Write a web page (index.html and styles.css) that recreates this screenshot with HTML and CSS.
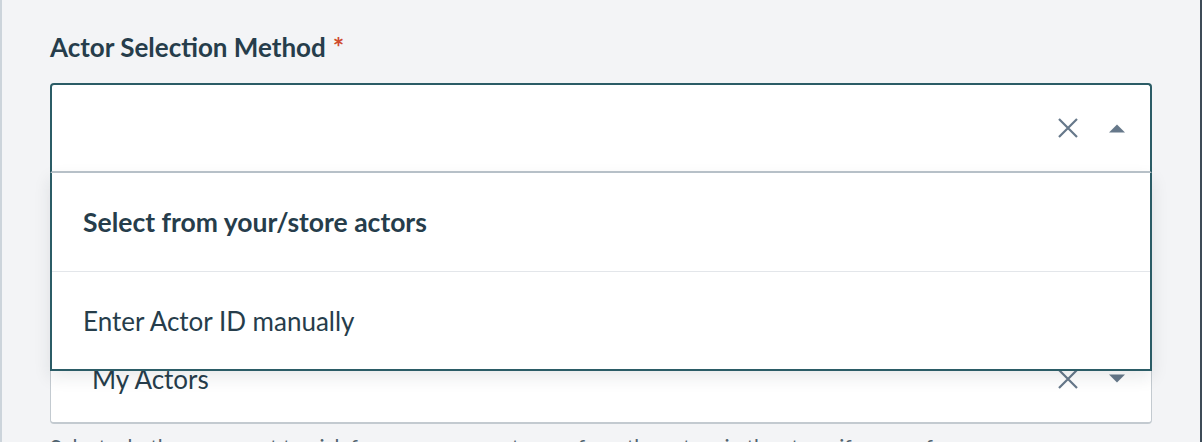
FILE: index.html
```html
<!DOCTYPE html>
<html>
<head>
<meta charset="utf-8">
<link rel="stylesheet" href="styles.css">
</head>
<body>
<div class="panel">
  <div class="group">
    <label class="label">Actor Selection Method<span class="req">*</span></label>
    <div class="select-wrap">
      <div class="select open">
        <div class="value"></div>
        <div class="icons">
          <svg class="clear" width="20" height="20" viewBox="0 0 20 20"><path d="M1 1L19 19M19 1L1 19" stroke="#66788a" stroke-width="2.2" fill="none"/></svg>
          <svg class="caret" width="16" height="9" viewBox="0 0 16 9"><path d="M8 0.5L16 8.5H0Z" fill="#66788a"/></svg>
        </div>
      </div>
      <ul class="menu">
        <li class="option selected">Select from your/store actors</li>
        <li class="option">Enter Actor ID manually</li>
      </ul>
    </div>
  </div>
  <div class="group second">
    <div class="select closed">
      <div class="value">My Actors</div>
      <div class="icons">
        <svg class="clear" width="20" height="20" viewBox="0 0 20 20"><path d="M1 1L19 19M19 1L1 19" stroke="#66788a" stroke-width="2.2" fill="none"/></svg>
        <svg class="caret" width="16" height="9" viewBox="0 0 16 9"><path d="M0 0.5H16L8 8.5Z" fill="#66788a"/></svg>
      </div>
    </div>
    <p class="help">Select whether you want to pick from your own actors or from the actors in the store, if you prefer.</p>
  </div>
</div>
</body>
</html>
```

FILE: styles.css
```css
html, body {
  margin: 0;
  padding: 0;
}
body {
  width: 1202px;
  height: 442px;
  overflow: hidden;
  box-sizing: border-box;
  background: #f3f4f6;
  border-left: 2px solid #ccd4db;
  border-right: 2px solid #3d4b57;
  font-family: Lato, "Noto Sans", sans-serif;
  color: #263d4b;
}
.panel {
  padding: 30px 48px 0 48px;
  width: 1102px;
}
.group {
  display: flex;
  flex-direction: column;
}
.label {
  display: block;
  font-size: 26px;
  font-weight: 700;
  line-height: 34px;
  margin-bottom: 19px;
}
.req {
  color: #cf4a2d;
  margin-left: 7px;
  font-size: 27px;
}
.select-wrap {
  position: relative;
  z-index: 5;
}
.select {
  box-sizing: border-box;
  height: 90px;
  background: #fff;
  display: flex;
  align-items: center;
  justify-content: space-between;
}
.select.open {
  border: 2px solid #2b5c66;
  border-bottom: 2px solid #bac4cb;
  border-radius: 4px 4px 0 0;
}
.select.closed {
  border: 1px solid #c3cad0;
  border-bottom-width: 2px;
  border-radius: 4px;
  padding-left: 41px;
}
.value {
  font-size: 26px;
  flex: 1;
}
.icons {
  display: flex;
  align-items: center;
  gap: 31px;
  padding-right: 25px;
}
.closed .icons {
  padding-right: 26px;
}
.clear {
  display: block;
}
.caret {
  display: block;
}
.menu {
  position: absolute;
  left: 0;
  right: 0;
  top: 100%;
  margin: 0;
  padding: 0;
  list-style: none;
  background: #fff;
  border: 2px solid #2b5c66;
  border-top: 0;
  box-shadow: 0 6px 16px rgba(30, 40, 50, 0.10);
}
.option {
  height: 98px;
  display: flex;
  align-items: center;
  padding-left: 31px;
  font-size: 26px;
}
.option.selected {
  font-weight: 700;
  font-size: 26.5px;
}
.option + .option {
  border-top: 1px solid #e3e6ea;
  height: 97px;
}
.help {
  margin: 8px 0 0 0;
  font-size: 21px;
  line-height: 30px;
  color: #51636f;
}
.group.second {
  margin-top: 161px;
}
```
